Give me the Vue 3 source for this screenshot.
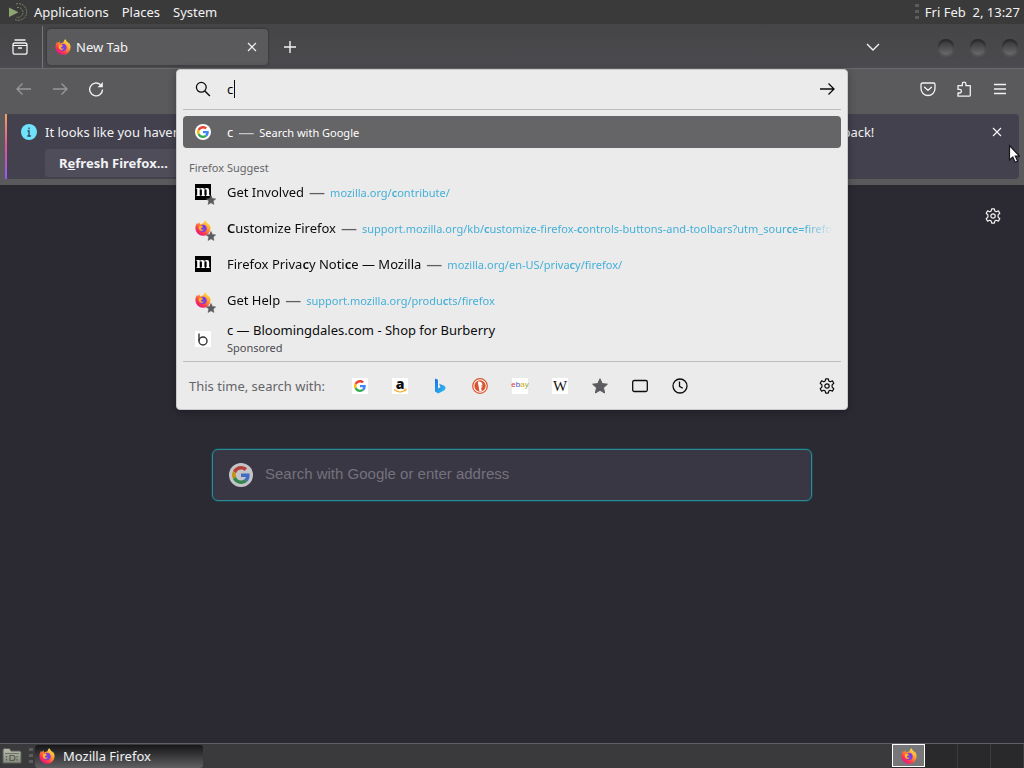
<template>
  <div class="desktop">
    <svg class="sprite" aria-hidden="true">
      <defs>
        <linearGradient id="ff-body" x1="0.8" y1="0.1" x2="0.2" y2="0.9">
          <stop offset="0" stop-color="#ffe14a" />
          <stop offset="0.4" stop-color="#ff8f2e" />
          <stop offset="0.75" stop-color="#fb3750" />
          <stop offset="1" stop-color="#e31587" />
        </linearGradient>
        <linearGradient id="bing-fill" x1="0" y1="0" x2="1" y2="1">
          <stop offset="0" stop-color="#1b6fe0" />
          <stop offset="1" stop-color="#31c1f0" />
        </linearGradient>
        <linearGradient id="folder-fill" x1="0" y1="0" x2="0" y2="1">
          <stop offset="0" stop-color="#b9bdae" />
          <stop offset="1" stop-color="#868b7e" />
        </linearGradient>
      </defs>
      <symbol id="firefox" viewBox="0 0 16 16">
        <path fill="url(#ff-body)" d="M15.5 7.2c-.3-1.8-1.2-3-2.2-3.9.3.6.5 1.2.5 1.7C13 3.300 11.300 2.500 10.500 0.300 9.200 1 8.700 2.200 8.600 3.200c-1.200.1-2.200.6-3 1.300C5 4.200 4.600 3.500 4.800 2.300 3.900 2.800 3.300 3.500 2.800 4.200 2.400 3.900 2.300 3 2.400 2.400 1.200 3.700.4 5.800.4 8.200a7.600 7.600 0 0 0 15.200.1z" />
        <path fill="#7a3fe0" d="M8 4.800c2.200 0 3.700 1.600 3.700 3.600S10.200 12 8.200 12C6 12 4.400 10.500 4.400 8.600c0-1 .5-1.700 1-2 .8.200 1.500.5 2.400.4 0-.6-.8-.9-1.400-1.400.4-.5 1-.8 1.600-.8z" />
        <path fill="#ffb42e" d="M4 6.200c1.300-.5 2.700-.1 3.900.8-.5.9-1.700.8-2.200 1.700.7 1 2 1.200 3.200.6-.7 1.600-2.700 2-4 .9C3.800 9.200 3.400 7.500 4 6.200z" />
      </symbol>
      <symbol id="google" viewBox="0 0 16 16">
        <circle cx="8" cy="8" r="8" fill="#fff" />
        <use href="#google-g" x="2" y="2" width="12" height="12" />
      </symbol>
      <symbol id="google-g" viewBox="0 0 48 48">
        <path fill="#ea4335" d="M24 9.500c3.500 0 6.700 1.200 9.200 3.600l6.900-6.900C35.900 2.400 30.500 0 24 0 14.600 0 6.500 5.400 2.600 13.200l8 6.200C12.400 13.700 17.700 9.500 24 9.500z" />
        <path fill="#4285f4" d="M47 24.600c0-1.600-.2-3.100-.4-4.600H24v9h12.900c-.6 3-2.300 5.500-4.800 7.200l7.700 6C44.400 38 47 31.800 47 24.600z" />
        <path fill="#fbbc05" d="M10.500 28.600A14.500 14.500 0 0 1 10.500 19.400l-7.900-6.200a24 24 0 0 0 0 21.600z" />
        <path fill="#34a853" d="M24 48c6.500 0 11.900-2.100 15.900-5.800l-7.700-6c-2.200 1.500-4.900 2.300-8.200 2.300-6.300 0-11.600-4.200-13.500-9.900l-8 6.200C6.500 42.600 14.600 48 24 48z" />
      </symbol>
      <symbol id="bloomingdales" viewBox="0 0 16 16">
        <rect width="16" height="16" fill="#fff" />
        <path d="M4 2.500v7.500" stroke="#333" stroke-width="1.400" />
        <circle cx="8" cy="10" r="4" fill="none" stroke="#333" stroke-width="1.400" />
      </symbol>
      <symbol id="smile" viewBox="0 0 16 16">
        <path d="M2 11.500c3.500 3 8 3 11 .8" fill="none" stroke="#f0a828" stroke-width="1.300" />
        <path d="M11.800 11.200l2.400-.2-.6 2.400" fill="none" stroke="#f0a828" />
      </symbol>
      <symbol id="bing" viewBox="0 0 16 16">
        <path fill="url(#bing-fill)" d="M3 .5l3 1.200v8.800l2.500-1.300-1.300-3.400 5 1.900c.9.500 1.300 1.300 1.300 2.300 0 1.200-.6 2-1.500 2.600L6.200 15.600 3 13.600z" />
      </symbol>
      <symbol id="duck" viewBox="0 0 16 16">
        <circle cx="8" cy="8" r="7.300" fill="#fff" stroke="#d9532c" stroke-width="1.200" />
        <circle cx="8" cy="8" r="5.700" fill="#d9532c" />
        <path fill="#fff" d="M5.800 3.800c2-.6 4.400.3 4.600 2.400v1.300H8.800c.2.900 1 1 2 1.200-.6.900-1.600.8-1.800 1.200l.8 3.200c-.8.300-1.800.2-2.400 0z" />
      </symbol>
      <symbol id="star" viewBox="0 0 16 16">
        <path fill="#5b5b60" stroke="#5b5b60" stroke-linejoin="round" d="M8 .8l2.200 4.800 5.200.6-3.900 3.500 1.100 5.300L8 12.300 3.400 15l1.100-5.300L.6 6.200l5.200-.6z" />
      </symbol>
      <symbol id="tabs" viewBox="0 0 16 16">
        <rect x="0.700" y="2.500" width="14.600" height="11" rx="1.500" fill="none" stroke="currentColor" stroke-width="1.300" />
      </symbol>
      <symbol id="history" viewBox="0 0 16 16">
        <circle cx="8" cy="8" r="7" fill="none" stroke="currentColor" stroke-width="1.300" />
        <path d="M7.500 3.500v4.800l3.300 2" fill="none" stroke="currentColor" stroke-width="1.300" />
      </symbol>
      <symbol id="gear" viewBox="0 0 16 16">
        <path d="M6.700.8h2.600l.5 2.100 1.400.8 2.200-.8 1.400 2.400-1.700 1.600v2.200l1.700 1.600-1.400 2.400-2.200-.8-1.400.8-.5 2.100H6.700l-.5-2.100-1.400-.8-2.200.8-1.400-2.400 1.700-1.600V6.900L1.200 5.300l1.400-2.400 2.200.8 1.400-.8z" fill="none" stroke="currentColor" stroke-width="1.200" stroke-linejoin="round" />
        <circle cx="8" cy="8" r="2.200" fill="none" stroke="currentColor" stroke-width="1.200" />
      </symbol>
      <symbol id="search" viewBox="0 0 16 16">
        <circle cx="6.300" cy="6.300" r="4.900" fill="none" stroke="currentColor" stroke-width="1.300" />
        <path d="M9.900 9.900l5 5" stroke="currentColor" stroke-width="1.400" />
      </symbol>
      <symbol id="arrow" viewBox="0 0 16 16">
        <path d="M1 8h14M9.500 2.500L15 8l-5.500 5.500" fill="none" stroke="currentColor" stroke-width="1.300" />
      </symbol>
      <symbol id="reload" viewBox="0 0 16 16">
        <path d="M14.500 8.500A6.400 6.400 0 1 1 12.300 3.600" fill="none" stroke="currentColor" stroke-width="1.400" />
        <path d="M14.800 1v5.200H9.600z" fill="currentColor" />
      </symbol>
      <symbol id="close" viewBox="0 0 16 16">
        <path d="M4 4l8 8M12 4l-8 8" stroke="currentColor" stroke-width="1.200" />
      </symbol>
      <symbol id="plus" viewBox="0 0 16 16">
        <path d="M8 2v12M2 8h12" stroke="currentColor" stroke-width="1.400" />
      </symbol>
      <symbol id="chevron" viewBox="0 0 16 16">
        <path d="M2 5l6 6 6-6" fill="none" stroke="currentColor" stroke-width="1.400" />
      </symbol>
      <symbol id="view" viewBox="0 0 16 16">
        <path d="M3 1h10" stroke="currentColor" stroke-width="1.300" stroke-linecap="round" />
        <path d="M1 6q0-2 2-2h10q2 0 2 2v7.200q0 2-2 2H3q-2 0-2-2zM6 9h4" fill="none" stroke="currentColor" stroke-width="1.300" />
        <path d="M1 6.500h14" stroke="currentColor" />
      </symbol>
      <symbol id="pocket" viewBox="0 0 16 16">
        <path d="M2.500 2h11q1.500 0 1.500 1.500V7.500a7 7 0 0 1-14 0V3.500Q1 2 2.500 2z" fill="none" stroke="currentColor" stroke-width="1.300" />
        <path d="M4.600 6.200L8 9.400l3.400-3.200" fill="none" stroke="currentColor" stroke-width="1.400" stroke-linecap="round" />
      </symbol>
      <symbol id="puzzle" viewBox="0 0 16 16">
        <path d="M2 15.200V12h1.600a1.800 1.800 0 0 0 0-3.600H2V4.700h4.300V3a1.800 1.800 0 0 1 3.600 0v1.700H14.300V14q0 1.200-1.200 1.200z" fill="none" stroke="currentColor" stroke-width="1.300" stroke-linejoin="round" />
      </symbol>
      <symbol id="menu" viewBox="0 0 16 16">
        <path d="M2 3.500h12M2 8h12M2 12.500h12" stroke="currentColor" stroke-width="1.400" />
      </symbol>
      <symbol id="info" viewBox="0 0 16 16">
        <circle cx="8" cy="8" r="8" fill="#6fe3fb" />
        <path d="M8 3.500v1.800M6.500 7H8v5M6.300 12h3.600" fill="none" stroke="#34405a" stroke-width="1.300" />
      </symbol>
      <symbol id="distro" viewBox="0 0 20 20">
        <path d="M1 5.500l9.500 4.800L1 15z" fill="#8fa573" />
        <path d="M8 2a8.300 8.300 0 1 1-1 15.500M9 5.500a5 5 0 1 1-1 9.500" fill="none" stroke="#7c8b66" stroke-dasharray="2 1" />
      </symbol>
      <symbol id="folder" viewBox="0 0 20 16">
        <path d="M1 15V2q0-1.500 1.500-1.500h5L9 3h8.500Q19 3 19 4.500V15z" fill="url(#folder-fill)" stroke="#5a5e54" />
        <path d="M3 5.500h14" stroke="#6d7265" />
        <path d="M8 7.500h2.500a2.500 2.500 0 0 1 0 5H8zM4.500 8v1.500M4.500 11v1.500M15 8v1.500M15 11v1.500" fill="none" stroke="#565b50" stroke-width="1.200" />
      </symbol>
      <symbol id="pointer" viewBox="0 0 12 20">
        <path d="M1.500 1.500v14.500l3.300-3 2.300 5.200 2.500-1.100-2.300-5h4.200z" fill="#fff" stroke="#16161c" stroke-width="1.200" />
      </symbol>
    </svg>

    <header class="panel panel-top">
      <svg class="distro"><use href="#distro" /></svg>
      <nav class="panel-menu">
        <button v-for="item in panelMenu" :key="item" type="button">{{ item }}</button>
      </nav>
      <span class="grip"></span>
      <time class="clock">Fri Feb&nbsp; 2, 13:27</time>
    </header>

    <div class="tabbar">
      <button class="view-btn" type="button" aria-label="Firefox View"><svg class="icon"><use href="#view" /></svg></button>
      <div class="tab">
        <svg class="icon"><use href="#firefox" /></svg>
        <span class="tab-title">New Tab</span>
        <button type="button" aria-label="Close tab"><svg class="icon"><use href="#close" /></svg></button>
      </div>
      <button class="new-tab" type="button" aria-label="New tab"><svg class="icon"><use href="#plus" /></svg></button>
      <button class="all-tabs" type="button" aria-label="List all tabs"><svg class="icon"><use href="#chevron" /></svg></button>
      <div class="window-buttons">
        <button v-for="name in windowButtons" :key="name" type="button" :aria-label="name"></button>
      </div>
    </div>

    <div class="toolbar">
      <div class="nav-buttons">
        <button class="dim" type="button" aria-label="Back"><svg class="icon flip"><use href="#arrow" /></svg></button>
        <button class="dim" type="button" aria-label="Forward"><svg class="icon"><use href="#arrow" /></svg></button>
        <button type="button" aria-label="Reload"><svg class="icon"><use href="#reload" /></svg></button>
      </div>
      <div class="urlbar-slot">
        <div class="urlbar">
          <div class="urlbar-input">
            <svg class="icon"><use href="#search" /></svg>
            <div class="url-field">
              <input v-model="query" type="text" aria-label="Search with Google or enter address" />
              <span class="caret"></span>
            </div>
            <button type="button" aria-label="Go"><svg class="icon"><use href="#arrow" /></svg></button>
          </div>

          <div class="result selected">
            <svg class="icon"><use href="#google" /></svg>
            <span class="title">{{ query }}</span>
            <span class="dash">—</span>
            <span class="action">Search with Google</span>
          </div>
          <div class="group-label">Firefox Suggest</div>
          <div v-for="row in results" :key="row.title" class="result suggestion">
            <span class="favicon">
              <span v-if="row.icon === 'mozilla'" class="icon letter mozilla">m</span>
              <svg v-else class="icon"><use :href="'#' + row.icon" /></svg>
              <svg v-if="row.starred" class="badge"><use href="#star" /></svg>
            </span>
            <span class="title"><span v-for="(part, i) in split(row.title)" :key="i" :class="{ hit: isHit(part) }">{{ part }}</span></span>
            <span class="dash">—</span>
            <a class="url" href="#"><span v-for="(part, i) in split(row.url)" :key="i" :class="{ hit: isHit(part) }">{{ part }}</span></a>
          </div>
          <div class="result sponsored">
            <svg class="icon"><use href="#bloomingdales" /></svg>
            <div class="sponsored-text">
              <span class="title">c — Bloomingdales.com - Shop for Burberry</span>
              <span class="note">Sponsored</span>
            </div>
          </div>

          <div class="one-offs">
            <span class="one-offs-label">This time, search with:</span>
            <button v-for="engine in engines" :key="engine.name" type="button" :aria-label="engine.name">
              <svg v-if="engine.icon" class="icon" :class="{ boxed: engine.boxed }"><use :href="'#' + engine.icon" /></svg>
              <span v-else-if="engine.name === 'eBay'" class="icon letter ebay"><i>e</i><i>b</i><i>a</i><i>y</i></span>
              <span v-else class="icon letter" :class="engine.name.toLowerCase()">
                {{ engine.letter }}
                <svg v-if="engine.name === 'Amazon'" class="icon smile"><use href="#smile" /></svg>
              </span>
            </button>
            <button class="settings" type="button" aria-label="Search settings"><svg class="icon"><use href="#gear" /></svg></button>
          </div>
        </div>
      </div>
      <div class="tool-buttons">
        <button type="button" aria-label="Save to Pocket"><svg class="icon"><use href="#pocket" /></svg></button>
        <button type="button" aria-label="Extensions"><svg class="icon"><use href="#puzzle" /></svg></button>
        <button type="button" aria-label="Menu"><svg class="icon"><use href="#menu" /></svg></button>
      </div>
    </div>

    <div class="notice-wrap">
      <div class="notice">
        <svg class="icon"><use href="#info" /></svg>
        <div class="notice-body">
          <p>It looks like you haven't started Firefox in a while. Do you want to clean it up for a fresh, new experience? And by the way, welcome back!</p>
          <button class="refresh" type="button">R<u>e</u>fresh Firefox…</button>
        </div>
        <button type="button" aria-label="Close"><svg class="icon"><use href="#close" /></svg></button>
      </div>
      <svg class="pointer"><use href="#pointer" /></svg>
    </div>

    <main class="newtab">
      <button class="customize" type="button" aria-label="Personalize new tab"><svg class="icon"><use href="#gear" /></svg></button>
      <label class="handoff">
        <svg class="handoff-icon"><use href="#google" /></svg>
        <input type="text" placeholder="Search with Google or enter address" />
      </label>
    </main>

    <footer class="panel panel-bottom">
      <svg class="folder"><use href="#folder" /></svg>
      <span class="grip"></span>
      <button class="task" type="button"><svg class="icon"><use href="#firefox" /></svg>Mozilla Firefox</button>
      <div class="workspaces">
        <button class="active" type="button" aria-label="Workspace 1"><svg class="icon"><use href="#firefox" /></svg></button>
        <button v-for="n in 3" :key="n" type="button" :aria-label="`Workspace ${n + 1}`"></button>
      </div>
    </footer>
  </div>
</template>

<script setup>
import { ref } from 'vue'

const query = ref('c')

const panelMenu = ['Applications', 'Places', 'System']
const windowButtons = ['Minimize', 'Maximize', 'Close']

const results = [
  { icon: 'mozilla', starred: true, title: 'Get Involved', url: 'mozilla.org/contribute/' },
  { icon: 'firefox', starred: true, title: 'Customize Firefox', url: 'support.mozilla.org/kb/customize-firefox-controls-buttons-and-toolbars?utm_source=firefox' },
  { icon: 'mozilla', starred: false, title: 'Firefox Privacy Notice — Mozilla', url: 'mozilla.org/en-US/privacy/firefox/' },
  { icon: 'firefox', starred: true, title: 'Get Help', url: 'support.mozilla.org/products/firefox' }
]

const engines = [
  { name: 'Google', icon: 'google-g', boxed: true },
  { name: 'Amazon', letter: 'a' },
  { name: 'Bing', icon: 'bing' },
  { name: 'DuckDuckGo', icon: 'duck' },
  { name: 'eBay' },
  { name: 'Wikipedia', letter: 'W' },
  { name: 'Bookmarks', icon: 'star' },
  { name: 'Tabs', icon: 'tabs' },
  { name: 'History', icon: 'history' }
]

// typed letter is shown bold inside titles and addresses
const split = (text) => text.split(/(c)/i).filter(Boolean)
const isHit = (part) => part.toLowerCase() === 'c'
</script>

<style>
body {
  margin: 0;
}
</style>

<style scoped>
.desktop {
  display: flex;
  flex-direction: column;
  height: 100vh;
  overflow: hidden;
  background: #2b2a33;
  color: #f2f2f4;
  font-family: "Noto Sans", sans-serif;
  font-size: 13px;
}

.desktop * {
  box-sizing: border-box;
}

.sprite {
  position: absolute;
  width: 0;
  height: 0;
}

button {
  display: flex;
  align-items: center;
  justify-content: center;
  padding: 0;
  border: 0;
  background: none;
  color: inherit;
  font: inherit;
}

input {
  min-width: 0;
  padding: 0;
  border: 0;
  outline: 0;
  background: none;
  font: inherit;
}

.icon {
  flex: none;
  display: block;
  width: 16px;
  height: 16px;
}

.flip {
  transform: scaleX(-1);
}

.letter {
  position: relative;
  background: #fff;
  color: #111;
  line-height: 16px;
  text-align: center;
}

.mozilla {
  display: flex;
  justify-content: center;
  background: #000;
  color: #fff;
  font-family: "Liberation Serif", serif;
  font-size: 17px;
  font-weight: 700;
  line-height: 14px;
}

.amazon {
  font-family: "Open Sans", sans-serif;
  font-size: 14px;
  font-weight: 800;
  line-height: 11px;
}

.smile {
  position: absolute;
  top: 0;
  left: 0;
}

.wikipedia {
  font-family: "Liberation Serif", serif;
  font-size: 15px;
}

.ebay {
  display: flex;
  justify-content: center;
  font-family: "Liberation Sans", sans-serif;
  font-size: 8px;
  line-height: 14px;
}

.ebay i {
  color: #d33;
  font-style: normal;
}

.ebay i:nth-child(2) { color: #35b; }
.ebay i:nth-child(3) { color: #d9a514; }
.ebay i:nth-child(4) { color: #7fae2b; }

.panel {
  display: flex;
  align-items: center;
  flex: none;
}

.panel-top {
  height: 24px;
  padding: 0 4px 0 8px;
  background: #3a3a3a;
}

.distro {
  width: 20px;
  height: 20px;
}

.panel-menu {
  display: flex;
  gap: 13px;
  flex: 1;
  margin-left: 6px;
}

.grip {
  width: 4px;
  height: 16px;
  background: repeating-linear-gradient(#5c5c5c 0 3px, transparent 3px 6px);
}

.clock {
  margin-left: 6px;
}

.tabbar {
  display: flex;
  align-items: center;
  flex: none;
  height: 45px;
  padding-top: 2px;
  border-bottom: 1px solid #6a6a6c;
  background: linear-gradient(#454547, #4b4b4f);
}

.view-btn {
  width: 43px;
  height: 42px;
  padding-right: 2px;
  border-right: 1px solid #77777a;
}

.tab {
  display: flex;
  align-items: center;
  width: 221px;
  height: 36px;
  margin-left: 4px;
  padding: 0 8px;
  border-radius: 4px;
  background: #5a5a5d;
  box-shadow: 0 0 3px rgba(0, 0, 0, .4);
}

.tab-title {
  flex: 1;
  margin-left: 5px;
  line-height: 18px;
}

.new-tab {
  width: 43px;
}

.all-tabs {
  width: 32px;
  margin-left: auto;
}

.window-buttons {
  display: flex;
  gap: 16px;
  margin: 0 6px 0 49px;
}

.window-buttons button {
  width: 16px;
  height: 16px;
  border-radius: 50%;
  background: linear-gradient(#323234, #69696c);
  box-shadow: inset 0 2px 2px #2a2a2c, 0 2px 2px #57575a;
}

.toolbar {
  display: flex;
  flex: none;
  height: 45px;
  background: #5a5a5c;
}

.nav-buttons,
.tool-buttons {
  display: flex;
  align-items: center;
  width: 176px;
  height: 40px;
}

.nav-buttons {
  gap: 20px;
  padding-left: 16px;
}

.tool-buttons {
  gap: 20px;
  justify-content: flex-end;
  padding-right: 16px;
}

.dim {
  color: #98989b;
}

.urlbar-slot {
  position: relative;
  flex: 1;
}

.urlbar {
  position: absolute;
  top: 0;
  right: 0;
  left: 0;
  z-index: 2;
  padding: 0 6px;
  border: 1px solid #c9c9cb;
  border-radius: 4px;
  background: #ebebeb;
  color: #0c0c0d;
  box-shadow: 0 2px 8px rgba(0, 0, 0, .3);
}

.urlbar-input {
  display: flex;
  align-items: center;
  gap: 16px;
  height: 40px;
  margin-bottom: 6px;
  padding: 0 6px 2px 12px;
  border-bottom: 1px solid #bdbdbf;
}

.url-field {
  position: relative;
  display: flex;
  flex: 1;
}

.url-field input {
  flex: 1;
}

.caret {
  position: absolute;
  top: 0;
  left: 7px;
  width: 1px;
  height: 18px;
  background: #0c0c0d;
}

.result {
  display: flex;
  align-items: center;
  height: 36px;
  padding: 0 8px 0 12px;
  white-space: nowrap;
}

.suggestion {
  mask-image: linear-gradient(to left, transparent 8px, #000 36px);
}

.result > .icon,
.favicon {
  flex: none;
  margin-right: 16px;
}

.selected {
  height: 32px;
  border-radius: 4px;
  background: #656567;
  color: #fff;
}

.favicon {
  position: relative;
}

.badge {
  position: absolute;
  right: -5px;
  bottom: -5px;
  width: 10px;
  height: 10px;
}

.dash {
  margin: 0 5px;
  color: #5f5f63;
  font-size: 16px;
}

.selected .dash {
  color: #c5c5c7;
}

.action,
.url,
.group-label,
.note {
  font-size: 11px;
}

.url {
  min-width: 0;
  overflow: hidden;
  color: #45b0d8;
  text-decoration: none;
}

.hit {
  font-weight: 600;
}

.group-label {
  height: 26px;
  padding: 12px 6px 0;
  color: #656569;
  line-height: 16px;
}

.sponsored {
  height: 41px;
  margin-bottom: 2px;
}

.sponsored-text {
  display: flex;
  flex-direction: column;
  line-height: 18px;
}

.note {
  color: #4c4c50;
}

.one-offs {
  display: flex;
  align-items: center;
  gap: 24px;
  height: 48px;
  padding: 0 6px;
  border-top: 1px solid #bdbdbf;
}

.one-offs-label {
  margin-right: 3px;
  color: #656569;
}

.boxed {
  padding: 2px;
  background: #fff;
}

.settings {
  margin-left: auto;
}

.notice-wrap {
  position: relative;
  flex: none;
  padding: 0 5px 6px;
  background: #5a5a5c;
}

.notice {
  display: flex;
  align-items: flex-start;
  height: 65px;
  padding: 9px 14px 0 14px;
  border-left: 2px solid;
  border-image: linear-gradient(#f5a45c, #e0559a, #9059ff) 1;
  border-radius: 4px;
  background: #42414d;
}

.notice > .icon,
.notice > button {
  margin-top: 1px;
}

.notice-body {
  flex: 1;
  min-width: 0;
  margin-left: 8px;
}

.notice-body p {
  margin: 0;
  line-height: 18px;
  white-space: nowrap;
}

.refresh {
  height: 28px;
  margin-top: 8px;
  padding: 0 14px;
  border-radius: 4px;
  background: #4e4d59;
  font-weight: 700;
}

.pointer {
  position: absolute;
  top: 30px;
  right: 4px;
  width: 12px;
  height: 20px;
}

.newtab {
  flex: 1;
  padding: 0 23px;
}

.customize {
  margin: 23px 0 0 auto;
}

.handoff {
  display: flex;
  align-items: center;
  width: 600px;
  max-width: 100%;
  height: 52px;
  margin: 225px auto 0;
  padding: 0 16px;
  border: 1px solid #2c8a94;
  border-radius: 6px;
  background: #3a3744;
  box-shadow: 0 0 0 1px #1b4650;
}

.handoff-icon {
  width: 24px;
  height: 24px;
  margin-right: 12px;
  opacity: .7;
}

.handoff input {
  flex: 1;
  padding-bottom: 4px;
  font-family: "Liberation Sans", sans-serif;
  font-size: 15px;
}

.handoff input::placeholder {
  color: #74727d;
  opacity: 1;
}

.panel-bottom {
  height: 25px;
  border-top: 1px solid #606064;
  background: #3a3a3c;
}

.folder {
  width: 20px;
  height: 16px;
  margin: 0 7px 0 2px;
}

.task {
  justify-content: flex-start;
  gap: 8px;
  width: 168px;
  height: 23px;
  margin-left: 2px;
  padding: 0 4px;
  border-radius: 3px;
  background: linear-gradient(#161618, #5f5f61);
}

.workspaces {
  display: flex;
  height: 24px;
  margin-left: auto;
  background: #29292b;
}

.workspaces button {
  width: 33px;
  border-right: 1px solid #3c3c3f;
}

.workspaces .active {
  height: 23px;
  border: 1px solid #fff;
  background: #77777a;
}
</style>
